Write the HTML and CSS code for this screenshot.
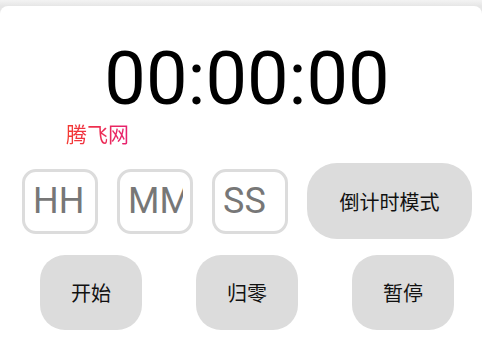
FILE: index.html
```html
<!DOCTYPE html>
<html lang="zh">
<head>
<meta charset="utf-8">
<title>倒计时</title>
<link rel="stylesheet" href="styles.css">
</head>
<body>
<div class="card">
  <div class="timer">00:00:00</div>
  <div class="brand">腾飞网</div>
  <div class="controls">
    <input class="field" type="text" placeholder="HH">
    <input class="field" type="text" placeholder="MM">
    <input class="field" type="text" placeholder="SS">
    <button class="btn mode">倒计时模式</button>
  </div>
  <div class="actions">
    <button class="btn action">开始</button>
    <button class="btn action">归零</button>
    <button class="btn action">暂停</button>
  </div>
</div>
</body>
</html>
```
FILE: styles.css
```css
html, body {
  margin: 0;
  padding: 0;
}
body {
  width: 482px;
  height: 356px;
  overflow: hidden;
  background: linear-gradient(#f3f3f3, #e6e6e6 6px);
  font-family: "Noto Sans CJK SC", "Noto Sans", sans-serif;
}
.card {
  margin-top: 6px;
  height: 350px;
  background: #ffffff;
  border-radius: 8px 8px 0 0;
}
.timer {
  padding-top: 34px;
  padding-left: 12px;
  font-family: Roboto, "Noto Sans", sans-serif;
  font-size: 74px;
  line-height: 78px;
  text-align: center;
  color: #000000;
}
.brand {
  margin-left: 66px;
  font-size: 21px;
  line-height: 30px;
  width: max-content;
  background: linear-gradient(90deg, #f43a30, #e62070);
  -webkit-background-clip: text;
  background-clip: text;
  color: transparent;
}
.controls {
  display: flex;
  align-items: center;
  gap: 19px;
  margin-top: 15px;
  padding-left: 22px;
}
.field {
  box-sizing: border-box;
  width: 76px;
  height: 65px;
  margin: 0;
  border: 3px solid #dcdcdc;
  border-radius: 14px;
  padding: 0 7px 0 8px;
  font-family: Roboto, sans-serif;
  font-size: 36px;
  color: #333;
  background: #fff;
  outline: none;
}
.field::placeholder {
  color: #777777;
}
.btn {
  margin: 0;
  border: none;
  background: #dcdcdc;
  color: #111111;
  font-family: "Noto Sans CJK SC", sans-serif;
  font-size: 20px;
  padding: 0;
}
.mode {
  width: 165px;
  height: 76px;
  border-radius: 30px;
}
.actions {
  display: flex;
  gap: 54px;
  margin-top: 16px;
  padding-left: 40px;
}
.action {
  width: 102px;
  height: 75px;
  border-radius: 25px;
}
```
